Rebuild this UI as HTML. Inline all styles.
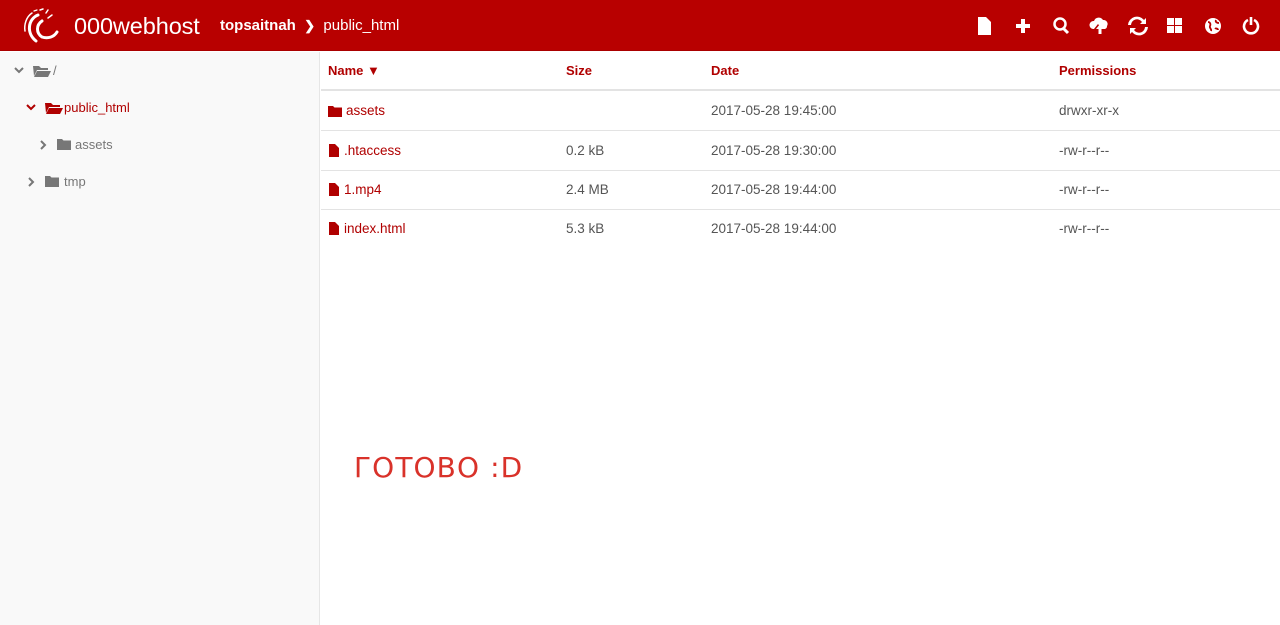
<!DOCTYPE html>
<html><head><meta charset="utf-8">
<style>
*{margin:0;padding:0;box-sizing:border-box}
body{width:1280px;height:625px;overflow:hidden;font-family:"Liberation Sans",sans-serif;background:#fff;position:relative}
.hdr{position:absolute;left:0;top:0;width:1280px;height:51px;background:#b80000;border-bottom:1px solid #a00}
.logo{position:absolute;left:74px;top:13px;color:#fff;font-size:23.5px;letter-spacing:-0.1px}
.bc{position:absolute;left:220px;top:17px;color:#fff;font-size:15px}
.bc b{font-weight:bold}
.side{position:absolute;left:0;top:52px;width:320px;height:573px;background:#f9f9f9;border-right:1px solid #e6e6e6}
.ti{position:absolute;font-size:13px;color:#777;display:flex;align-items:center}
.main{position:absolute;left:321px;top:52px;width:959px}
.th{position:absolute;top:0;height:39px;border-bottom:2px solid #e3e3e3;width:959px}
.th span{position:absolute;top:11px;font-size:13px;font-weight:bold;color:#b00000}
.row{position:absolute;height:40px;width:959px;border-bottom:1px solid #e3e3e3;font-size:13.5px;color:#555}
.row span{position:absolute;top:12px}
.row .n{color:#b00000;left:7px;display:flex;align-items:center;gap:4px;top:12px}
</style></head><body>
<div class="hdr">
<svg style="position:absolute;left:20px;top:7px" width="46" height="38" viewBox="0 0 46 38">
<g fill="none" stroke="#fff" stroke-linecap="round">
<path d="M18 8 C8 12 6 26 16 34" stroke-width="3"/>
<path d="M22 14 C16 18 16 26 22 30 C28 32 34 30 37 25" stroke-width="3"/>
<path d="M12 6 C6 10 4 18 5 24" stroke-width="1.5"/>
<path d="M20 3 l3 -1" stroke-width="1.5"/><path d="M26 6 l2 -3" stroke-width="1.5"/>
<path d="M28 11 l4 -3" stroke-width="1.5"/><path d="M14 4 l3 -1" stroke-width="1.2"/>
</g></svg>
<div class="logo">000webhost</div>
<div class="bc"><b>topsaitnah</b> &nbsp;<b style="font-size:13px">&#x276F;</b>&nbsp; public_html</div>
<svg style="position:absolute;left:976px;top:16px" width="290" height="20" viewBox="0 0 290 20" fill="#fff">
<path d="M2 1h8l5 5v13H2z"/>
<path d="M45 3h4v5h5v4h-5v5h-4v-5h-5v-4h5z"/>
<circle cx="84" cy="8" r="5.5" fill="none" stroke="#fff" stroke-width="2.5"/><path d="M87 12l5 5" stroke="#fff" stroke-width="3"/>
<path d="M117 13a4 4 0 0 1 1-8a5 5 0 0 1 9-1a4 4 0 0 1 4 6a3 3 0 0 1-2 3h-3l-4-5-4 5z"/><path d="M124 8l-4 5h2.5v5h3v-5h2.5z"/>
<path d="M155 9a6 6 0 0 1 11-3l-2 2h6V2l-2 2A9 9 0 0 0 152 9zM169 11a6 6 0 0 1-11 3l2-2h-6v6l2-2a9 9 0 0 0 16-5z"/>
<rect x="191" y="2" width="7" height="7"/><rect x="199" y="2" width="7" height="7"/><rect x="191" y="10" width="7" height="7"/><rect x="199" y="10" width="7" height="7"/>
<circle cx="237" cy="10" r="8"/><path d="M232 6c2 0 3 2 2 4s2 3 1 5M240 4c-1 2 1 3 3 3M239 12c1 1 3 0 3 2" stroke="#b80000" stroke-width="1.8" fill="none"/>
<path d="M278 4a7 7 0 1 1-6 0" fill="none" stroke="#fff" stroke-width="2.6"/><rect x="273.7" y="1" width="2.6" height="8"/>
</svg>
</div>
<div class="side">
<svg style="position:absolute;left:14px;top:14px" width="10" height="8"><path d="M1 2l4 4 4-4" stroke="#777" stroke-width="2" fill="none"/></svg>
<svg style="position:absolute;left:33px;top:13px" width="18" height="12"><path d="M0 1h6l2 2h7v2H4L1 11z M4 6h14l-3 6H1z" fill="#777"/></svg>
<div class="ti" style="left:53px;top:11px">/</div>
<svg style="position:absolute;left:26px;top:51px" width="10" height="8"><path d="M1 2l4 4 4-4" stroke="#b00000" stroke-width="2" fill="none"/></svg>
<svg style="position:absolute;left:45px;top:50px" width="18" height="12"><path d="M0 1h6l2 2h7v2H4L1 11z M4 6h14l-3 6H1z" fill="#b00000"/></svg>
<div class="ti" style="left:64px;top:48px;color:#b00000">public_html</div>
<svg style="position:absolute;left:39px;top:88px" width="8" height="10"><path d="M2 1l4 4-4 4" stroke="#777" stroke-width="2" fill="none"/></svg>
<svg style="position:absolute;left:57px;top:86px" width="14" height="12"><path d="M0 1h5l1.5 1.5H14V12H0z" fill="#777"/></svg>
<div class="ti" style="left:75px;top:85px">assets</div>
<svg style="position:absolute;left:27px;top:125px" width="8" height="10"><path d="M2 1l4 4-4 4" stroke="#777" stroke-width="2" fill="none"/></svg>
<svg style="position:absolute;left:45px;top:123px" width="14" height="12"><path d="M0 1h5l1.5 1.5H14V12H0z" fill="#777"/></svg>
<div class="ti" style="left:64px;top:122px">tmp</div>
</div>
<div class="main">
<div class="th"><span style="left:7px">Name &#x25BC;</span><span style="left:245px">Size</span><span style="left:390px">Date</span><span style="left:738px">Permissions</span></div>
<div class="row" style="top:39px"><span class="n"><svg width="14" height="12"><path d="M0 1h5l1.5 1.5H14V12H0z" fill="#b00000"/></svg>assets</span><span style="left:390px">2017-05-28 19:45:00</span><span style="left:738px">drwxr-xr-x</span></div>
<div class="row" style="top:79px"><span class="n"><svg width="12" height="13"><path d="M1 0h6l4 4v9H1z" fill="#b00000"/></svg>.htaccess</span><span style="left:245px">0.2 kB</span><span style="left:390px">2017-05-28 19:30:00</span><span style="left:738px">-rw-r--r--</span></div>
<div class="row" style="top:118px"><span class="n"><svg width="12" height="13"><path d="M1 0h6l4 4v9H1z" fill="#b00000"/></svg>1.mp4</span><span style="left:245px">2.4 MB</span><span style="left:390px">2017-05-28 19:44:00</span><span style="left:738px">-rw-r--r--</span></div>
<div class="row" style="top:157px;border-bottom:none"><span class="n"><svg width="12" height="13"><path d="M1 0h6l4 4v9H1z" fill="#b00000"/></svg>index.html</span><span style="left:245px">5.3 kB</span><span style="left:390px">2017-05-28 19:44:00</span><span style="left:738px">-rw-r--r--</span></div>
</div>
<div style="position:absolute;left:354px;top:451px;color:#d9322a;font-size:28px;letter-spacing:1.1px;font-family:'DejaVu Sans',sans-serif">ГОТОВО :D</div>
</body></html>
